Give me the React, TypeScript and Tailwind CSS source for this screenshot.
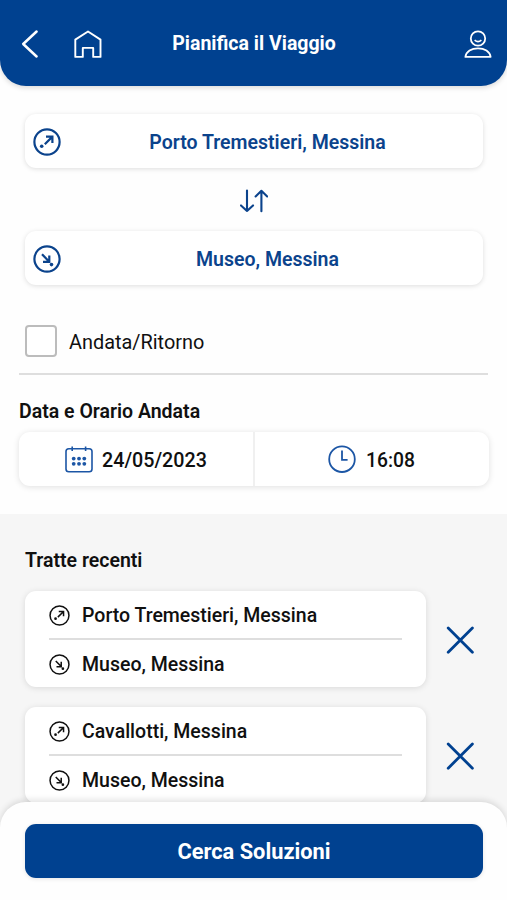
import { useState } from 'react';

const RECENT_ROUTES = [
  { id: 1, from: 'Porto Tremestieri, Messina', to: 'Museo, Messina' },
  { id: 2, from: 'Cavallotti, Messina', to: 'Museo, Messina' },
];

function DepartureIcon({ className, thin }: { className?: string; thin?: boolean }) {
  return (
    <svg viewBox="0 0 28 28" className={className} fill="none" stroke="currentColor" strokeWidth={thin ? 2 : 2.2}>
      <circle cx="14" cy="14" r="12.6" />
      <path d="M11.8 16.2 L19.4 8.6 M13 8.6 H19.4 V15" />
      <circle cx="8.7" cy="18.2" r="1.8" fill="currentColor" stroke="none" />
    </svg>
  );
}

function ArrivalIcon({ className, thin }: { className?: string; thin?: boolean }) {
  return (
    <svg viewBox="0 0 28 28" className={className} fill="none" stroke="currentColor" strokeWidth={thin ? 2 : 2.2}>
      <circle cx="14" cy="14" r="12.6" />
      <path d="M9 9.2 L16 16.4 M10 16.9 H16.3 V10.4" />
      <circle cx="18.5" cy="19.6" r="1.8" fill="currentColor" stroke="none" />
    </svg>
  );
}

function Header() {
  return (
    <header className="relative z-10 h-[86px] shrink-0 bg-[#004190] rounded-b-[26px] shadow-[0_2px_5px_rgba(0,0,0,0.14)] flex items-center pl-[20px] pr-[14px] text-white">
      <svg width="20" height="30" viewBox="0 0 20 30" fill="none" stroke="currentColor" strokeWidth="2.5" strokeLinecap="round" strokeLinejoin="round" className="mt-[2px]">
        <path d="M16.6 2.5 L3.2 15 L16.6 27.5" />
      </svg>
      <svg width="28" height="28" viewBox="0 0 28 28" fill="none" stroke="currentColor" strokeWidth="1.9" strokeLinejoin="round" className="ml-[34px] mt-[2px]">
        <path d="M1.3 9.6 L14 1.5 L26.5 9.6 V26.9 H19.2 V17.9 H8.8 V26.9 H1.3 Z" />
      </svg>
      <h1 className="flex-1 pt-[2px] pr-[58px] text-center text-[19.5px] leading-[24px] font-bold">
        Pianifica il Viaggio
      </h1>
      <svg width="28" height="28" viewBox="0 0 28 28" fill="none" stroke="currentColor" strokeWidth="1.8" className="mt-[2px] mr-[1px]">
        <circle cx="14" cy="8.5" r="7.2" />
        <path d="M10.6 10.2 Q14 13 17.4 10.2" strokeWidth="1.6" />
        <path d="M1.4 26.9 C2.2 21.6 7.4 18.3 14 18.3 S25.8 21.6 26.6 26.9 Z" strokeLinejoin="round" />
      </svg>
    </header>
  );
}

function StopField({ icon, label }: { icon: React.ReactNode; label: string }) {
  return (
    <button className="flex h-[54px] w-full items-center rounded-[11px] bg-white pt-px pr-[9px] pl-[8px] text-[#0b438c] shadow-[0_1px_5px_rgba(0,0,0,0.13)]">
      {icon}
      <span className="flex-1 pt-[2px] text-center text-[19.5px] leading-[24px] font-semibold">{label}</span>
    </button>
  );
}

export default function App() {
  const [roundTrip, setRoundTrip] = useState(false);
  const [routes, setRoutes] = useState(RECENT_ROUTES);

  return (
    <main className="flex h-[900px] w-full flex-col overflow-hidden bg-[#fefefe] font-[Roboto,sans-serif] text-[#101010]">
      <Header />

      <section className="h-[428px] shrink-0 pt-[28px]">
        <div className="pl-[25px] pr-[24px]">
          <StopField icon={<DepartureIcon className="size-[28px]" />} label="Porto Tremestieri, Messina" />
          <div className="flex h-[63px] items-center justify-center pt-[2px]">
            <svg width="28" height="24" viewBox="0 0 28 24" fill="none" stroke="#0b438c" strokeWidth="2.1" strokeLinecap="round" strokeLinejoin="round">
              <path d="M7 1.5 V22 M1 16.4 L7 22 L13 16.4" />
              <path d="M21.4 22.3 V1.8 M15.6 7.4 L21.4 1.8 L27.2 7.4" />
            </svg>
          </div>
          <StopField icon={<ArrivalIcon className="size-[28px]" />} label="Museo, Messina" />
        </div>

        <div className="mx-[19px] mt-[40px] border-b-2 border-[#dedede] pl-[6px] pb-[16px]">
          <label className="flex items-center">
            <input
              type="checkbox"
              checked={roundTrip}
              onChange={() => setRoundTrip(!roundTrip)}
              className="size-[32px] appearance-none rounded-[4px] border-2 border-[#bcbcbc] bg-white"
            />
            <span className="ml-[12px] pt-[4px] text-[19.9px] leading-[24px]">Andata/Ritorno</span>
          </label>
        </div>

        <h2 className="mt-[25px] ml-[19px] text-[19.5px] leading-[24px] font-semibold">Data e Orario Andata</h2>
        <div className="mt-[8px] ml-[19px] mr-[18px] flex h-[54px] rounded-[11px] bg-white text-[19.7px] font-medium shadow-[0_1px_6px_rgba(0,0,0,0.12)]">
          <button className="flex w-[236px] items-center border-r-2 border-[#f0f0f0] pl-[46px]">
            <svg width="28" height="28" viewBox="0 0 28 28" fill="none" stroke="#1c56a5" strokeWidth="1.6">
              <rect x="1" y="3.7" width="26" height="23.1" rx="2.8" />
              <path d="M7.2 1.4 V6 M20.6 1.4 V6" />
              <g fill="#1c56a5" stroke="none">
                <circle cx="8.7" cy="13.6" r="1.9" />
                <circle cx="14" cy="13.6" r="1.9" />
                <circle cx="19.3" cy="13.6" r="1.9" />
                <circle cx="8.7" cy="18.8" r="1.9" />
                <circle cx="14" cy="18.8" r="1.9" />
                <circle cx="19.3" cy="18.8" r="1.9" />
              </g>
            </svg>
            <span className="ml-[9px] pt-[3px]">24/05/2023</span>
          </button>
          <button className="flex flex-1 items-center pl-[73px]">
            <svg width="28" height="28" viewBox="0 0 28 28" fill="none" stroke="#1c56a5" strokeWidth="1.8">
              <circle cx="14" cy="14.2" r="12.8" />
              <path d="M14 5.4 V14.8 H19.6" />
            </svg>
            <span className="ml-[10px] pt-[4px] text-[19.3px]">16:08</span>
          </button>
        </div>
      </section>

      <section className="min-h-0 flex-1 overflow-hidden bg-[#f6f6f6] pl-[25px] pt-[35px]">
        <h2 className="text-[19.5px] leading-[24px] font-semibold">Tratte recenti</h2>
        <div className="mt-[18px] flex flex-col gap-[20px]">
          {routes.map(r => (
            <div key={r.id} className="flex items-center">
              <div className="h-[96px] w-[401px] shrink-0 rounded-[11px] bg-white px-[24px] text-[19.5px] font-medium shadow-[0_1px_6px_rgba(0,0,0,0.12)]">
                <div className="flex h-[49px] items-center border-b-2 border-[#dedede] pt-[2px]">
                  <DepartureIcon thin className="size-[21px]" />
                  <span className="ml-[12px]">{r.from}</span>
                </div>
                <div className="flex h-[48px] items-center">
                  <ArrivalIcon thin className="size-[21px]" />
                  <span className="ml-[12px] pt-[2px]">{r.to}</span>
                </div>
              </div>
              <button className="ml-[20px] pt-[2px]" onClick={() => setRoutes(routes.filter(x => x.id !== r.id))}>
                <svg width="28" height="28" viewBox="0 0 28 28" fill="none" stroke="#004190" strokeWidth="2.8" strokeLinecap="round">
                  <path d="M2.2 2 L26.4 26.2 M26.4 2 L2.2 26.2" />
                </svg>
              </button>
            </div>
          ))}
        </div>
      </section>

      <footer className="relative z-10 -mt-[26px] h-[98px] shrink-0 rounded-t-[26px] bg-[#fefefe] pl-[25px] pr-[24px] pt-[22px] shadow-[0_-2px_6px_rgba(0,0,0,0.12)]">
        <button className="h-[54px] w-full rounded-[11px] bg-[#004190] pt-[2px] text-[21.8px] font-bold text-white shadow-[0_1px_4px_rgba(0,0,0,0.1)]">
          Cerca Soluzioni
        </button>
      </footer>
    </main>
  );
}
